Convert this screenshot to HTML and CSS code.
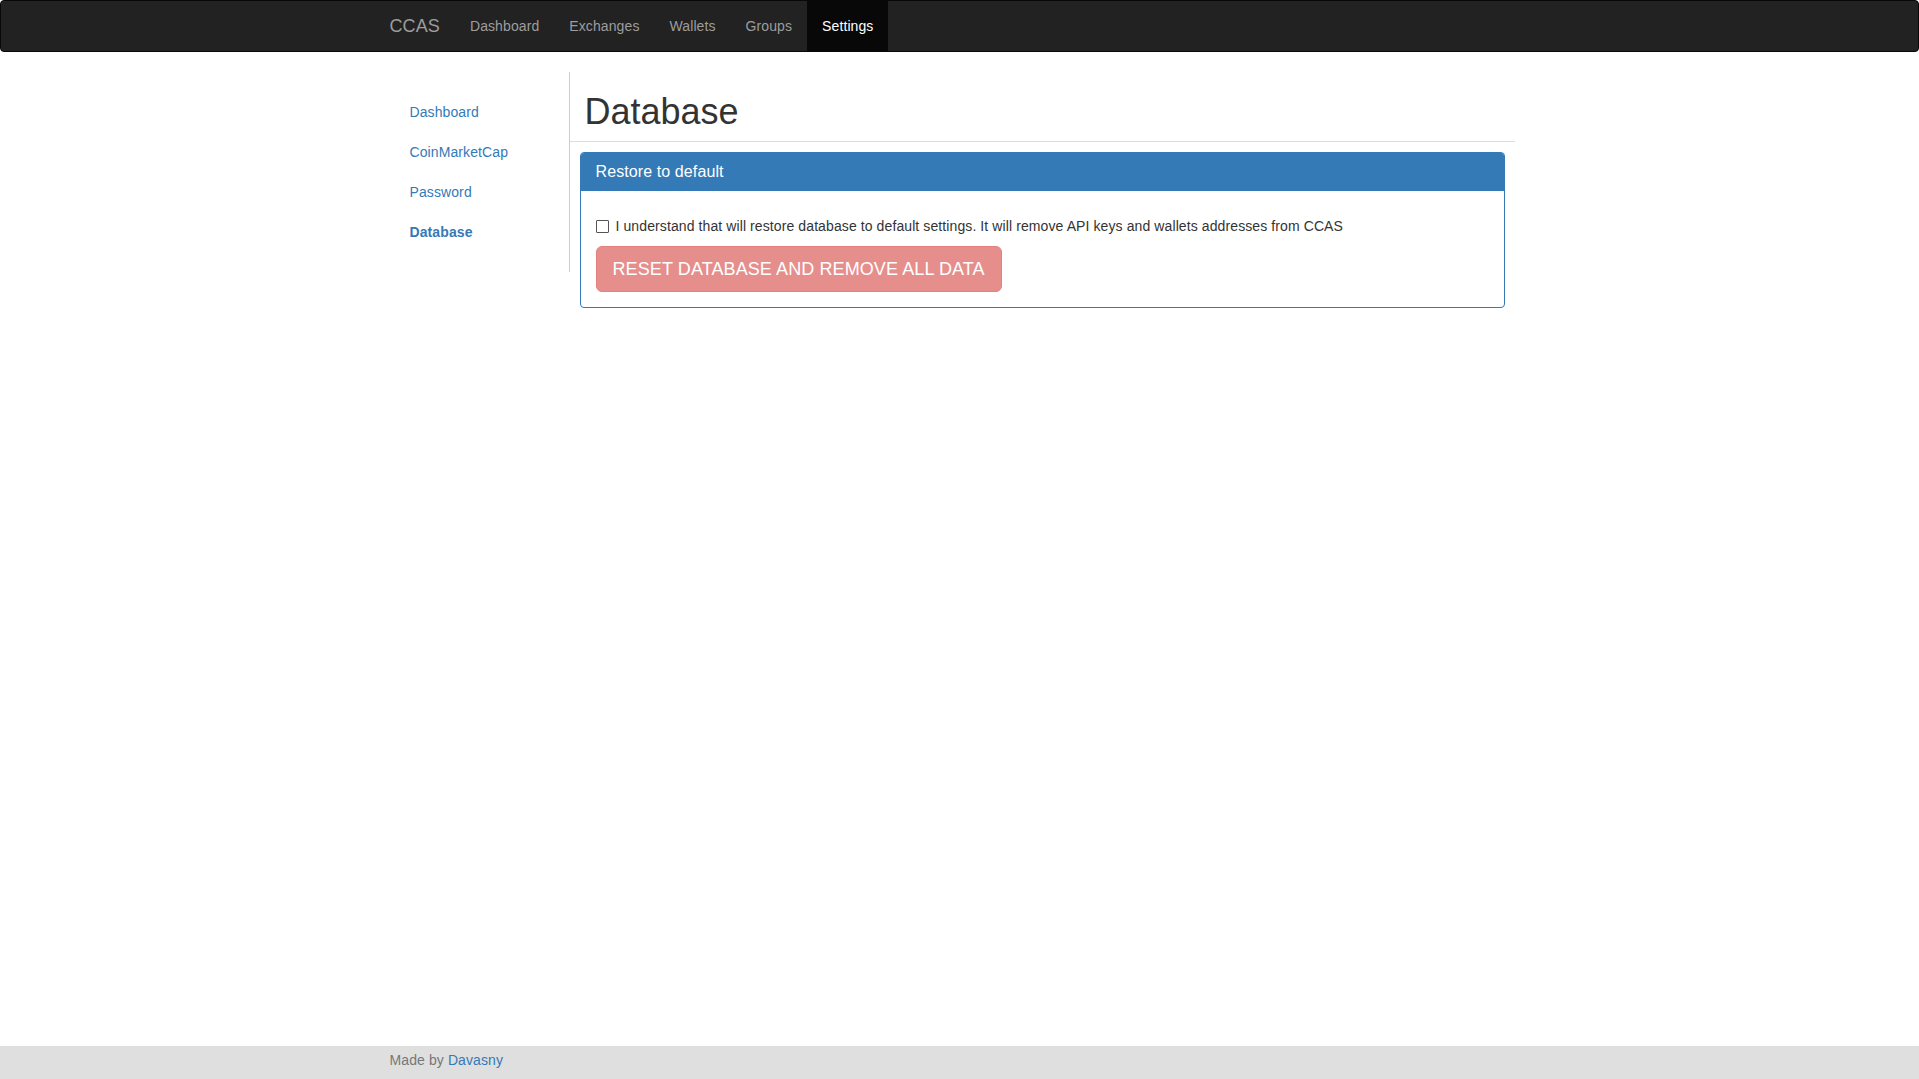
FILE: index.html
```html
<!DOCTYPE html>
<html lang="en">
<head>
<meta charset="utf-8">
<title>CCAS - Settings - Database</title>
<link rel="stylesheet" href="styles.css">
</head>
<body>
<nav class="navbar">
  <div class="container navbar-inner">
    <a class="brand" href="#">CCAS</a>
    <ul class="nav">
      <li><a href="#">Dashboard</a></li>
      <li><a href="#">Exchanges</a></li>
      <li><a href="#">Wallets</a></li>
      <li><a href="#">Groups</a></li>
      <li class="active"><a href="#">Settings</a></li>
    </ul>
  </div>
</nav>

<main class="container page">
  <aside class="sidebar">
    <ul class="side-nav">
      <li><a href="#">Dashboard</a></li>
      <li><a href="#">CoinMarketCap</a></li>
      <li><a href="#">Password</a></li>
      <li class="active"><a href="#">Database</a></li>
    </ul>
  </aside>
  <section class="content">
    <div class="page-header">
      <h1>Database</h1>
    </div>
    <div class="panel">
      <div class="panel-heading">Restore to default</div>
      <div class="panel-body">
        <label class="check">
          <input type="checkbox">
          <span>I understand that will restore database to default settings. It will remove API keys and wallets addresses from CCAS</span>
        </label>
        <button class="btn-danger" type="button" disabled>Reset database and remove all data</button>
      </div>
    </div>
  </section>
</main>

<footer class="footer">
  <div class="container">Made by <a href="#">Davasny</a></div>
</footer>
</body>
</html>
```

FILE: styles.css
```css
* { box-sizing: border-box; }

html, body { height: 100%; }

body {
  margin: 0;
  font-family: "Liberation Sans", Arial, Helvetica, sans-serif;
  font-size: 14px;
  line-height: 20px;
  letter-spacing: 0.1px;
  color: #333;
  background: #fff;
  display: flex;
  flex-direction: column;
  min-height: 100vh;
}

a { color: #337ab7; text-decoration: none; }

ul { list-style: none; margin: 0; padding: 0; }

.container {
  width: 1170px;
  margin: 0 auto;
  padding: 0 15px;
}

/* Navbar */
.navbar {
  background: #222;
  border: 1px solid #080808;
  border-radius: 4px;
  min-height: 52px;
  margin-bottom: 20px;
  flex: none;
}

.navbar-inner {
  display: flex;
  align-items: stretch;
  height: 50px;
}

.brand {
  display: block;
  font-size: 18px;
  line-height: 20px;
  padding: 15px;
  margin-left: -15px;
  color: #9d9d9d;
}

.nav { display: flex; }

.nav a {
  display: block;
  padding: 15px;
  line-height: 20px;
  color: #9d9d9d;
}

.nav .active a {
  background: #080808;
  color: #fff;
}

/* Page layout */
.page {
  flex: 1 0 auto;
  display: flex;
  align-items: flex-start;
  padding: 0;
  width: 1170px;
}

.sidebar {
  width: 195px;
  flex: none;
  border-right: 1px solid #ccc;
  padding: 20px 0;
}

.side-nav a {
  display: block;
  padding: 10px 20px 10px 35px;
  line-height: 20px;
  color: #337ab7;
}

.side-nav .active a { font-weight: bold; }

.content {
  width: 945px;
  flex: none;
}

.page-header {
  border-bottom: 1px solid #ddd;
  padding: 0 15px;
}

.page-header h1 {
  margin: 20px 0 9px;
  font-size: 36px;
  font-weight: 500;
  line-height: 1.1;
  letter-spacing: 0;
  color: #333;
}

/* Panel */
.panel {
  margin: 10px 10px 0;
  border: 1px solid #337ab7;
  border-radius: 4px;
  background: #fff;
}

.panel-heading {
  background: #337ab7;
  color: #fff;
  font-size: 16px;
  line-height: 17.6px;
  padding: 10px 15px;
  border-bottom: 1px solid #337ab7;
  border-radius: 3px 3px 0 0;
}

.panel-body {
  padding: 15px;
}

.check {
  display: flex;
  align-items: center;
  gap: 7px;
  margin: 10px 0 10px;
  line-height: 20px;
  cursor: pointer;
}

.check input {
  appearance: none;
  -webkit-appearance: none;
  margin: 0;
  width: 13px;
  height: 13px;
  flex: none;
  border: 1px solid #555;
  border-radius: 1px;
  background: #fff;
}

.check input:checked {
  background: #337ab7;
  border-color: #337ab7;
}

.btn-danger {
  display: block;
  margin-top: 10px;
  font-family: inherit;
  font-size: 18px;
  line-height: 24px;
  letter-spacing: 0.1px;
  padding: 10px 16px;
  text-transform: uppercase;
  color: #fff;
  background: #d9534f;
  border: 1px solid #d43f3a;
  border-radius: 6px;
  opacity: 0.65;
  cursor: not-allowed;
}

/* Footer */
.footer {
  flex: none;
  background: #dfdfdf;
  color: #777;
  padding: 4px 0 9px;
  line-height: 20px;
}
```
